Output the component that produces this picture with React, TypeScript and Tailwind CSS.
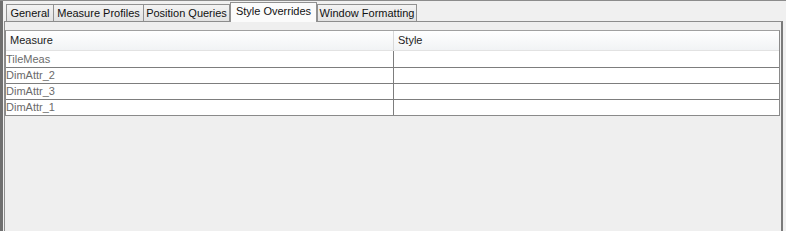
import React from "react";

const tabs = [
  { label: "General", w: "w-[47px]", br: false },
  { label: "Measure Profiles", w: "w-[90px]", br: false },
  { label: "Position Queries", w: "w-[87px]", br: true },
  { label: "Style Overrides", w: "w-[87px]", active: true, br: true },
  { label: "Window Formatting", w: "w-[100px]", br: true },
];

const rows = ["TileMeas", "DimAttr_2", "DimAttr_3", "DimAttr_1"];

export default function App() {
  return (
    <div
      className="w-[786px] h-[231px] overflow-hidden bg-[#f0f0f0] border-t border-[#8c8c8c] flex text-[11px]"
      style={{ fontFamily: '"Liberation Sans", Arial, sans-serif' }}
    >
      <div className="w-[3px] shrink-0 bg-[#6f6f6f]" />
      <div className="w-[1px] shrink-0" />
      <div className="w-[779px] shrink-0 flex flex-col">
        {/* tab strip */}
        <div className="h-[20px] flex items-end pl-[2px]">
          {tabs.map((t) =>
            t.active ? (
              <div
                key={t.label}
                className={`${t.w} h-[20px] -mb-px relative z-10 border border-b-0 border-[#919191] bg-[#fbfbfb] flex items-center justify-center text-[#111] leading-none pb-[2px]`}
              >
                {t.label}
              </div>
            ) : (
              <div
                key={t.label}
                className={`${t.w} h-[17px] border-t border-l ${t.br ? "border-r" : ""} border-[#919191] bg-gradient-to-b from-[#f3f3f3] to-[#e2e2e2] flex items-center justify-center text-[#111] leading-none`}
              >
                {t.label}
              </div>
            )
          )}
        </div>
        {/* panel */}
        <div className="flex-1 border-t border-l border-r-2 border-[#8d8d8d] border-r-[#7a7a7a] bg-[#efefef] pt-[8px] pr-[1px]">
          <div className="w-[775px] border border-[#8a8a8a] border-t-[#a0a0a0] bg-white">
            <div className="h-[20px] flex bg-gradient-to-b from-white to-[#f1f3f5] border-b border-[#e2e2e2] text-[#222]">
              <div className="w-[388px] flex items-center pl-[4px] border-r border-[#d9d9d9]">Measure</div>
              <div className="flex-1 flex items-center pl-[4px]">Style</div>
            </div>
            {rows.map((r, i) => (
              <div
                key={r}
                className={`h-[16px] flex text-[#6b6b6b] ${i > 0 ? "border-t border-[#7d7d7d]" : ""}`}
              >
                <div className="w-[388px] flex items-center border-r border-[#7d7d7d]">{r}</div>
                <div className="flex-1" />
              </div>
            ))}
          </div>
        </div>
      </div>
    </div>
  );
}
